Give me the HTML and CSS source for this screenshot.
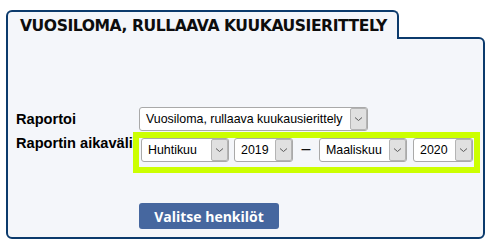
FILE: index.html
```html
<!DOCTYPE html>
<html lang="fi">
<head>
<meta charset="utf-8">
<title>Vuosiloma, rullaava kuukausierittely</title>
<link rel="stylesheet" href="styles.css">
</head>
<body>
<div class="panel">
  <div class="tab"><h1 class="title">VUOSILOMA, RULLAAVA KUUKAUSIERITTELY</h1></div>
  <div class="box">
    <div class="form">
      <div class="label">Raportoi</div>
      <div class="field">
        <div class="sel sel-report"><span class="val">Vuosiloma, rullaava kuukausierittely</span><span class="arr"><svg width="9" height="6" viewBox="0 0 9 6"><path d="M1 1.5 L4.5 4.5 L8 1.5" fill="none" stroke="#5a5a5a" stroke-width="1"/></svg></span></div>
      </div>
      <div class="label label-top">Raportin aikaväli</div>
      <div class="field range">
        <div class="sel sel-month"><span class="val">Huhtikuu</span><span class="arr"><svg width="9" height="6" viewBox="0 0 9 6"><path d="M1 1.5 L4.5 4.5 L8 1.5" fill="none" stroke="#5a5a5a" stroke-width="1"/></svg></span></div>
        <div class="sel sel-year"><span class="val">2019</span><span class="arr"><svg width="9" height="6" viewBox="0 0 9 6"><path d="M1 1.5 L4.5 4.5 L8 1.5" fill="none" stroke="#5a5a5a" stroke-width="1"/></svg></span></div>
        <span class="dash">–</span>
        <div class="sel sel-month"><span class="val">Maaliskuu</span><span class="arr"><svg width="9" height="6" viewBox="0 0 9 6"><path d="M1 1.5 L4.5 4.5 L8 1.5" fill="none" stroke="#5a5a5a" stroke-width="1"/></svg></span></div>
        <div class="sel sel-year"><span class="val">2020</span><span class="arr"><svg width="9" height="6" viewBox="0 0 9 6"><path d="M1 1.5 L4.5 4.5 L8 1.5" fill="none" stroke="#5a5a5a" stroke-width="1"/></svg></span></div>
      </div>
    </div>
    <button class="btn" type="button">Valitse henkilöt</button>
  </div>
</div>
</body>
</html>
```

FILE: styles.css
```css
html, body {
  margin: 0;
  background: #ffffff;
}

.panel {
  margin: 10px 0 0 6px;
  width: 479px;
}

.tab {
  position: relative;
  z-index: 1;
  box-sizing: border-box;
  width: 393px;
  height: 29px;
  margin-bottom: -2px;
  border: 2px solid #0b3a6c;
  border-bottom: none;
  border-radius: 6px 6px 0 0;
  background: #f4f6fa;
  padding: 5px 0 0 12px;
}

.title {
  margin: 0;
  font-family: "DejaVu Sans", Verdana, sans-serif;
  font-weight: bold;
  font-size: 15.6px;
  line-height: 19px;
  color: #0d0d0d;
  letter-spacing: -0.45px;
  white-space: nowrap;
}

.box {
  box-sizing: border-box;
  height: 202px;
  border: 2px solid #0b3a6c;
  border-radius: 0 6px 6px 6px;
  background: #f4f6fa;
  padding: 68px 0 0 8px;
}

.form {
  display: grid;
  grid-template-columns: 123px 335px;
  row-gap: 7px;
}

.label {
  align-self: center;
  font-family: "Liberation Sans", Arial, sans-serif;
  font-weight: bold;
  font-size: 14.6px;
  color: #000000;
  white-space: nowrap;
}

.label-top {
  align-self: start;
  margin-top: -3px;
}

.field {
  display: flex;
  align-items: center;
}

.range {
  height: 29px;
  box-sizing: border-box;
  padding: 0 0 5px 2px;
  outline: 6px solid #ccff00;
  gap: 5px;
}

.sel {
  box-sizing: border-box;
  display: flex;
  align-items: center;
  height: 24px;
  border: 1px solid #a9a9a9;
  border-radius: 3px;
  background: #ffffff;
  font-family: "Liberation Sans", Arial, sans-serif;
  font-size: 12.4px;
  color: #000000;
}

.sel .val {
  flex: 1;
  padding-left: 6px;
  white-space: nowrap;
}

.sel .arr {
  box-sizing: border-box;
  width: 17px;
  height: 22px;
  border: 1px solid #b4b4b4;
  border-radius: 2px;
  background: #e0e0e0;
  display: flex;
  align-items: center;
  justify-content: center;
}

.sel-report { width: 229px; }
.sel-month { width: 88px; }
.sel-year { width: 59px; }
.range .sel-year:last-child { width: 60px; margin-left: 1px; }

.dash {
  width: 16px;
  text-align: center;
  font-family: "Liberation Sans", Arial, sans-serif;
  font-size: 16px;
  color: #111111;
  margin-top: -2px;
}

.btn {
  display: block;
  margin: 36px 0 0 123px;
  width: 140px;
  height: 26px;
  border: none;
  border-radius: 3px;
  background: #46679f;
  color: #ffffff;
  font-family: "Open Sans", sans-serif;
  font-weight: bold;
  font-size: 14px;
  padding: 0;
}
```
